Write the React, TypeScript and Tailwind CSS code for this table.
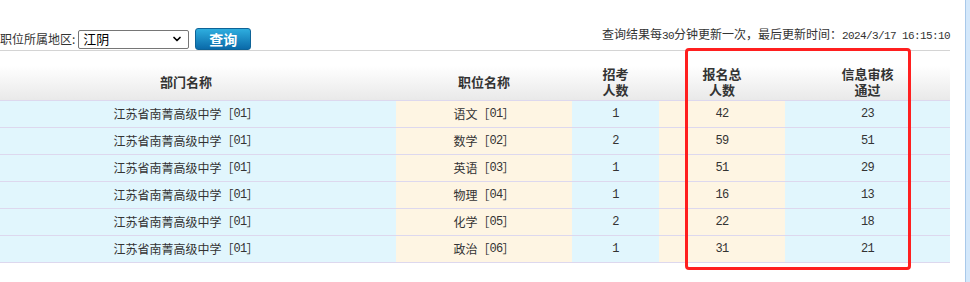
import { ChevronDown } from "lucide-react";

const rows = [
  ["语文", "01", "1", "42", "23"],
  ["数学", "02", "2", "59", "51"],
  ["英语", "03", "1", "51", "29"],
  ["物理", "04", "1", "16", "13"],
  ["化学", "05", "2", "22", "18"],
  ["政治", "06", "1", "31", "21"],
];

function Num({ children }: { children: React.ReactNode }) {
  return (
    <span className="font-['Liberation_Mono',monospace] text-[11px] tracking-[-0.6px]">
      {children}
    </span>
  );
}

function TNum({ children }: { children: React.ReactNode }) {
  return (
    <span className="font-['Liberation_Mono',monospace] text-[12px] tracking-[-0.8px]">
      {children}
    </span>
  );
}

export default function App() {
  return (
    <div className="relative flex h-[282px] w-[970px] overflow-hidden bg-white font-['Noto_Sans_CJK_SC',sans-serif] text-[#333]">
      <div className="w-[965px]">
        <div className="flex h-[50px] w-[950px] items-end justify-between">
          <div className="flex h-[22px] items-center">
            <span className="text-[12px] leading-[16px]">职位所属地区:</span>
            <div className="ml-[3px] flex h-[19px] w-[111px] items-center justify-between rounded-[2px] border border-[#767676] bg-white pl-[4px] pr-[5px]">
              <span className="text-[13px] leading-[16px] text-black">江阴</span>
              <ChevronDown size={12} strokeWidth={3.5} className="text-black" />
            </div>
            <div className="ml-[6px] flex h-[22px] w-[56px] items-center justify-center rounded-[3px] border border-[#0e6397] bg-gradient-to-b from-[#2eaedf] to-[#0a6aa9] text-[14px] font-bold leading-[16px] text-white">
              查询
            </div>
          </div>
          <div className="mb-[6px] text-[12px] leading-[16px]">
            查询结果每<Num>30</Num>分钟更新一次，最后更新时间：<Num>2024/3/17 16:15:10</Num>
          </div>
        </div>
        <div className="w-[950px] border-t border-[#d4d4d4]">
          <div className="flex h-[50px] border-b border-[#ddd8ee] bg-gradient-to-b from-white from-30% to-[#e9e9e9] pt-[12px] text-[13px] font-bold leading-[16px] text-[#333]">
            <div className="flex w-[396px] items-center justify-center pr-[24px]">部门名称</div>
            <div className="flex w-[176px] items-center justify-center">职位名称</div>
            <div className="flex w-[87px] flex-col items-center justify-center">
              <span>招考</span>
              <span>人数</span>
            </div>
            <div className="flex w-[126px] flex-col items-center justify-center">
              <span>报名总</span>
              <span>人数</span>
            </div>
            <div className="flex w-[165px] flex-col items-center justify-center">
              <span>信息审核</span>
              <span>通过</span>
            </div>
          </div>
          {rows.map((r) => (
            <div key={r[1]} className="flex h-[27px] border-b border-[#ddd8ee] text-[12px] leading-[16px]">
              <div className="flex w-[396px] items-center justify-center bg-[#e1f6fd] pr-[24px]">
                江苏省南菁高级中学［<TNum>01</TNum>］
              </div>
              <div className="flex w-[176px] items-center justify-center bg-[#fef5e3]">
                {r[0]}［<TNum>{r[1]}</TNum>］
              </div>
              <div className="flex w-[87px] items-center justify-center bg-[#e1f6fd]">
                <TNum>{r[2]}</TNum>
              </div>
              <div className="flex w-[126px] items-center justify-center bg-[#fef5e3]">
                <TNum>{r[3]}</TNum>
              </div>
              <div className="flex w-[165px] items-center justify-center bg-[#e1f6fd]">
                <TNum>{r[4]}</TNum>
              </div>
            </div>
          ))}
        </div>
      </div>
      <div className="h-[282px] w-[5px] border-l border-[#a9c9ea] bg-[#d4e8fb]" />
      <div className="absolute left-[685px] top-[48px] h-[222px] w-[226px] rounded-[4px] border-[3px] border-[#ff1f1f]" />
    </div>
  );
}
